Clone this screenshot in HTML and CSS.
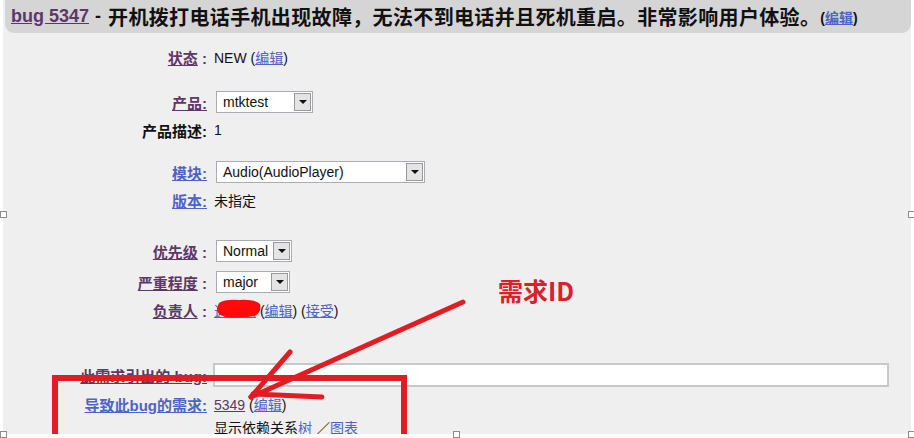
FILE: index.html
```html
<!DOCTYPE html>
<html lang="zh-CN">
<head>
    <meta charset="UTF-8">
    <title>bug 5347</title>
    <link rel="stylesheet" href="styles.css">
</head>
<body>
<div class="doc">
    <div class="shot">
        <div class="bug-title">
            <a class="visited" href="#">bug 5347</a> - <span class="summary">开机拨打电话手机出现故障，无法不到电话并且死机重启。非常影响用户体验。</span>
            <span class="edit">(<a href="#">编辑</a>)</span>
        </div>

        <div class="row r-status">
            <div class="label"><a class="visited" href="#">状态</a> :</div>
            <div class="value">NEW (<a href="#">编辑</a>)</div>
        </div>

        <div class="row r-product">
            <div class="label"><a class="visited" href="#">产品:</a></div>
            <div class="value"><span class="sel sel-product"><span>mtktest</span><span class="drop"></span></span></div>
        </div>
        <div class="row r-tight">
            <div class="label plain">产品描述:</div>
            <div class="value">1</div>
        </div>

        <div class="row r-component">
            <div class="label"><a href="#">模块:</a></div>
            <div class="value"><span class="sel sel-comp"><span>Audio(AudioPlayer)</span><span class="drop"></span></span></div>
        </div>
        <div class="row r-tight">
            <div class="label"><a href="#">版本:</a></div>
            <div class="value">未指定</div>
        </div>

        <div class="row r-priority">
            <div class="label"><a class="visited" href="#">优先级</a> :</div>
            <div class="value"><span class="sel sel-pri"><span>Normal</span><span class="drop"></span></span></div>
        </div>
        <div class="row r-severity">
            <div class="label"><a class="visited" href="#">严重程度</a> :</div>
            <div class="value"><span class="sel sel-sev"><span>major</span><span class="drop"></span></span></div>
        </div>
        <div class="row r-tight">
            <div class="label"><a class="visited" href="#">负责人</a> :</div>
            <div class="value"><a href="#">这个人</a> (<a href="#">编辑</a>) (<a href="#">接受</a>)</div>
        </div>

        <div class="row r-blocks">
            <div class="label"><a class="visited" href="#">此需求引出的 bug:</a></div>
            <div class="value"><span class="bug-input"></span></div>
        </div>
        <div class="row r-depends">
            <div class="label"><a href="#">导致此bug的需求:</a></div>
            <div class="value"><a class="visited" href="#">5349</a> (<a href="#">编辑</a>)</div>
        </div>
        <div class="row r-tree">
            <div class="label"></div>
            <div class="value">显示依赖关系<a class="plain-link" href="#">树</a> ／<a class="plain-link" href="#">图表</a></div>
        </div>

        <svg class="marks" width="908" height="434" viewBox="0 0 908 434">
            <path d="M216 303 Q222 299 236 300 Q252 299 257 304 Q259 312 252 316 Q236 319 222 317 Q213 314 214 308 Z" fill="#ff0a0a"/>
            <g stroke="#e31b23" stroke-width="5" stroke-linecap="round" fill="none">
                <rect x="52" y="378" width="349" height="90" stroke-width="6"/>
                <line x1="460" y1="302" x2="248" y2="397"/>
                <line x1="287" y1="352" x2="248" y2="397"/>
                <line x1="250" y1="394" x2="319" y2="397"/>
            </g>
        </svg>
        <div class="note">需求ID</div>
    </div>

    <span class="handle h-ml"></span>
    <span class="handle h-mr"></span>
    <span class="handle h-bl"></span>
    <span class="handle h-bm"></span>
    <span class="handle h-br"></span>
</div>
</body>
</html>
```

FILE: styles.css
```css
body {
    margin: 0;
    background: #fff;
    font-family: "Liberation Sans", "Noto Sans CJK SC", sans-serif;
    font-size: 14px;
    color: #111;
}
a { color: #4e63c6; }
a.visited { color: #5e3768; }

.doc { position: relative; width: 914px; height: 438px; overflow: hidden; }
.shot {
    position: relative;
    margin-left: 3px;
    width: 908px;
    height: 434px;
    overflow: hidden;
    background: #efefef;
}

.bug-title {
    margin: -8px 0 0 2px;
    height: 41px;
    padding: 8px 0 0 6px;
    box-sizing: border-box;
    display: flex;
    align-items: center;
    white-space: nowrap;
    background: #d5d5d5;
    border-radius: 9px;
    font-size: 18px;
    font-weight: bold;
}
.bug-title .summary { font-size: 20px; letter-spacing: 0.35px; margin-left: 7px; }
.bug-title a.visited { margin-right: 6px; }
.bug-title .edit { font-size: 14px; margin-left: 0; }

.row {
    display: grid;
    grid-template-columns: 204px 1fr;
    column-gap: 7px;
    align-items: center;
    height: 24px;
    white-space: nowrap;
}
.label {
    text-align: right;
    font-weight: bold;
    font-size: 15px;
    color: #5e3768;
}
.label.plain { color: #111; }
.value { font-size: 14px; }

.r-status { margin-top: 12px; }
.r-product { margin-top: 21px; }
.r-tight { margin-top: 4px; }
.r-component { margin-top: 18px; }
.r-priority { margin-top: 27px; }
.r-severity { margin-top: 7px; }
.r-blocks { margin-top: 41px; }
.r-depends { margin-top: 5px; }
.r-tree { margin-top: -1px; }

.sel {
    display: inline-flex;
    align-items: center;
    justify-content: space-between;
    box-sizing: border-box;
    height: 22px;
    margin-left: 2px;
    padding-left: 6px;
    background: #fff;
    border: 1px solid #a9adb3;
    color: #111;
    vertical-align: middle;
}
.sel-product { width: 97px; }
.sel-comp { width: 209px; }
.sel-pri { width: 76px; }
.sel-sev { width: 74px; }
.drop {
    position: relative;
    width: 15px;
    height: 16px;
    margin-right: 1px;
    border: 1px solid #9a9a9a;
    background: #e4e4e4;
}
.drop::after {
    content: "";
    position: absolute;
    left: 4px;
    top: 6px;
    border-left: 4px solid transparent;
    border-right: 4px solid transparent;
    border-top: 4px solid #111;
}

.bug-input {
    display: block;
    width: 676px;
    height: 24px;
    box-sizing: border-box;
    margin-left: -1px;
    background: #fff;
    border: 2px solid #c8c8c8;
}

.plain-link { text-decoration: none; }

.marks { position: absolute; left: 0; top: 0; }
.note {
    position: absolute;
    left: 495px;
    top: 272px;
    font-family: "Noto Sans CJK SC", sans-serif;
    font-size: 25px;
    font-weight: bold;
    color: #da2129;
}

.handle {
    position: absolute;
    width: 5px;
    height: 5px;
    background: #fff;
    border: 1px solid #8c8c8c;
}
.h-ml { left: 0; top: 211px; }
.h-mr { left: 908px; top: 211px; }
.h-bl { left: 0; top: 431px; }
.h-bm { left: 453px; top: 431px; }
.h-br { left: 908px; top: 431px; }
```
